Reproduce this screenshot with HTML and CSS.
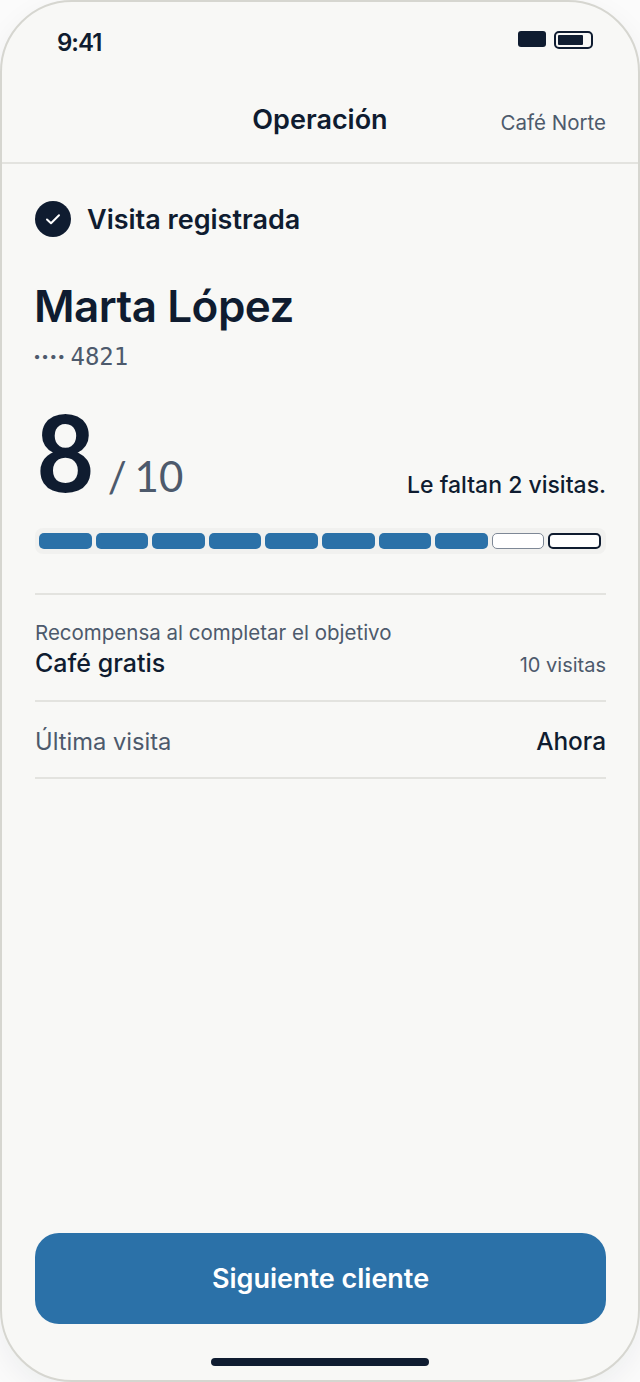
FILE: index.html
```html
<!DOCTYPE html>
<html lang="es">
<head>
    <meta charset="UTF-8">
    <meta name="viewport" content="width=device-width, initial-scale=1.0">
    <title>Operación</title>
    <link rel="stylesheet" href="styles.css">
</head>
<body>
    <div class="phone">
        <div class="status-bar">
            <span class="status-time">9:41</span>
            <div class="status-icons">
                <span class="signal"></span>
                <span class="battery"><span class="battery-level"></span></span>
            </div>
        </div>
        <header class="app-header">
            <h1 class="app-title">Operación</h1>
            <span class="app-store">Café Norte</span>
        </header>
        <main class="content">
            <div class="confirm-row">
                <svg class="confirm-icon" width="36" height="36" viewBox="0 0 36 36">
                    <circle cx="18" cy="18" r="18" fill="#0f1c30"/>
                    <path d="M12 18.5l4 3.8 8-8" fill="none" stroke="#fff" stroke-width="2" stroke-linecap="round" stroke-linejoin="round"/>
                </svg>
                <span class="confirm-text">Visita registrada</span>
            </div>
            <h2 class="customer-name">Marta López</h2>
            <div class="customer-card"><span class="card-dots">····</span> <span class="card-digits">4821</span></div>
            <div class="score-row">
                <div class="score">
                    <span class="score-value">8</span>
                    <span class="score-total">/ 10</span>
                </div>
                <span class="score-note">Le faltan 2 visitas.</span>
            </div>
            <div class="progress">
                <span class="segment filled"></span>
                <span class="segment filled"></span>
                <span class="segment filled"></span>
                <span class="segment filled"></span>
                <span class="segment filled"></span>
                <span class="segment filled"></span>
                <span class="segment filled"></span>
                <span class="segment filled"></span>
                <span class="segment empty"></span>
                <span class="segment goal"></span>
            </div>
            <section class="reward">
                <div class="reward-label">Recompensa al completar el objetivo</div>
                <div class="reward-line">
                    <span class="reward-name">Café gratis</span>
                    <span class="reward-visits">10 visitas</span>
                </div>
            </section>
            <section class="last-visit">
                <span class="last-label">Última visita</span>
                <span class="last-value">Ahora</span>
            </section>
        </main>
        <div class="footer">
            <button class="next-button">Siguiente cliente</button>
            <div class="home-indicator"></div>
        </div>
    </div>
</body>
</html>
```

FILE: styles.css
```css
* {
    box-sizing: border-box;
}

body {
    margin: 0;
    background: #fbfbfb;
    font-family: Inter, "Noto Sans", sans-serif;
    color: #0f1c30;
}

.phone {
    width: 640px;
    height: 1382px;
    display: flex;
    flex-direction: column;
    background: #f8f8f6;
    border: 2px solid #d6d6d0;
    border-radius: 72px;
    box-shadow: 0 10px 30px rgba(15,28,48,0.06);
    overflow: hidden;
}

/* Status bar */
.status-bar {
    display: flex;
    justify-content: space-between;
    align-items: center;
    height: 78px;
    padding: 0 45px 0 55px;
}

.status-time {
    margin-top: 2px;
    font-size: 24px;
    font-weight: 600;
    letter-spacing: -1px;
}

.status-icons {
    display: flex;
    gap: 8px;
    align-items: flex-start;
    margin-bottom: 2px;
}

.signal {
    width: 28px;
    height: 16px;
    background: #0f1c30;
    border-radius: 3px;
}

.battery {
    width: 39px;
    height: 18px;
    border: 2px solid #0f1c30;
    border-radius: 5px;
    padding: 2px 8px 2px 2px;
    display: flex;
}

.battery-level {
    flex: 1;
    background: #0f1c30;
    border-radius: 1px;
}

/* Header */
.app-header {
    position: relative;
    height: 84px;
    display: flex;
    align-items: center;
    justify-content: center;
    border-bottom: 2px solid #e3e3df;
}

.app-title {
    margin: 0 0 3px;
    font-size: 27px;
    font-weight: 600;
}

.app-store {
    position: absolute;
    right: 32px;
    top: 30px;
    font-size: 20.5px;
    color: #4d5a6c;
}

/* Content */
.content {
    flex: 1;
    padding: 0 32px 0 33px;
    display: flex;
    flex-direction: column;
}

.confirm-row {
    display: flex;
    align-items: center;
    gap: 16px;
    margin-top: 37px;
}

.confirm-text {
    font-size: 27px;
    font-weight: 600;
}

.customer-name {
    margin: 41px 0 0 -1px;
    font-size: 44px;
    line-height: 56px;
    font-weight: 600;
    letter-spacing: -0.5px;
}

.customer-card {
    display: flex;
    align-items: baseline;
    gap: 5px;
    margin: 8px 0 0 -2px;
    line-height: 30px;
    color: #4d5a6c;
}

.card-dots {
    font-size: 23px;
    font-weight: 800;
}

.card-digits {
    font-family: "DejaVu Sans Mono", monospace;
    font-size: 24px;
}

.score-row {
    display: flex;
    justify-content: space-between;
    align-items: flex-end;
    margin-top: 30px;
}

.score {
    display: flex;
    align-items: baseline;
    gap: 12px;
}

.score-value {
    font-family: Roboto, sans-serif;
    font-size: 107px;
    line-height: 108px;
    font-weight: 500;
}

.score-total {
    font-family: Lato, sans-serif;
    font-size: 42px;
    word-spacing: -3px;
    color: #4d5a6c;
}

.score-note {
    font-size: 23px;
    font-weight: 500;
    margin-bottom: 11px;
}

.progress {
    display: grid;
    grid-template-columns: repeat(10, 1fr);
    gap: 4px;
    margin-top: 18px;
    padding: 5px 5px 5px 4px;
    background: #f1f1ef;
    border-radius: 8px;
}

.segment {
    height: 16px;
    border-radius: 5px;
}

.segment.filled {
    background: #2b71a8;
}

.segment.empty {
    background: #fff;
    border: 1.5px solid #7e8896;
}

.segment.goal {
    background: #fff;
    border: 2.5px solid #0f1c30;
}

.reward {
    margin-top: 39px;
    padding: 26px 0 21px;
    border-top: 2px solid #e3e3df;
    border-bottom: 2px solid #e3e3df;
}

.reward-label {
    font-size: 20.5px;
    line-height: 24px;
    color: #4d5a6c;
}

.reward-line {
    display: flex;
    justify-content: space-between;
    align-items: baseline;
    margin-top: 2px;
}

.reward-name {
    font-size: 25px;
    line-height: 32px;
    font-weight: 500;
}

.reward-visits {
    font-size: 20px;
    color: #4d5a6c;
}

.last-visit {
    display: flex;
    justify-content: space-between;
    align-items: center;
    height: 77px;
    padding-top: 3px;
    border-bottom: 2px solid #e3e3df;
}

.last-label {
    font-size: 23.7px;
    color: #4d5a6c;
}

.last-value {
    font-size: 24.4px;
    font-weight: 500;
}

/* Footer */
.footer {
    padding: 0 32px 14px 33px;
    display: flex;
    flex-direction: column;
    align-items: center;
}

.next-button {
    width: 100%;
    height: 91px;
    border: none;
    border-radius: 24px;
    background: #2b71a8;
    color: #fff;
    font-family: inherit;
    font-size: 27px;
    font-weight: 600;
}

.home-indicator {
    width: 218px;
    height: 8px;
    margin: 34px 0 0 -1px;
    background: #0f1c30;
    border-radius: 4px;
}
```
